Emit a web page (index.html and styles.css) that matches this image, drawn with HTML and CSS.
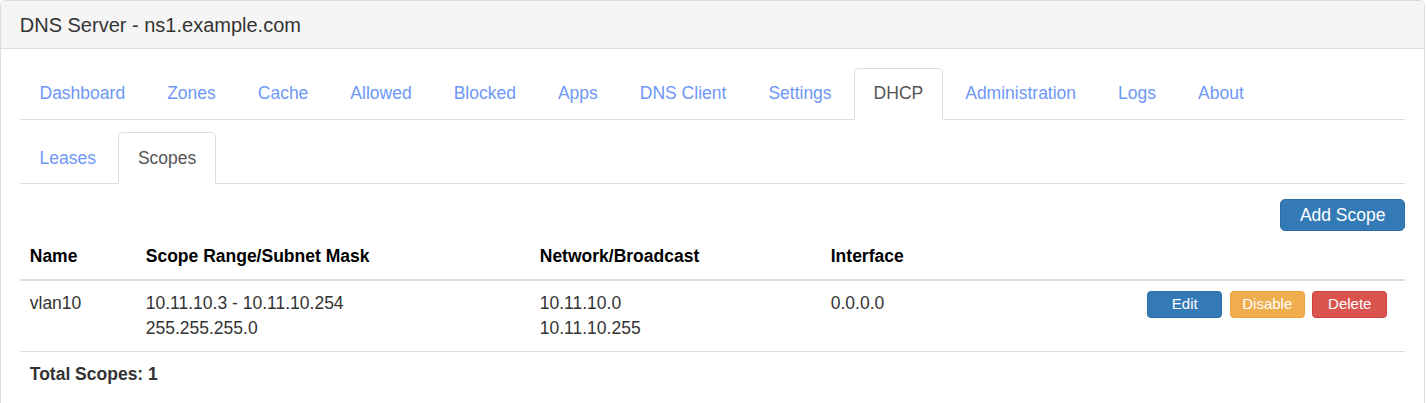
FILE: index.html
```html
<!DOCTYPE html>
<html lang="en">
<head>
<meta charset="utf-8">
<title>DNS Server - ns1.example.com</title>
<link rel="stylesheet" href="styles.css">
</head>
<body>
<div class="panel">
  <div class="panel-heading">
    <h3 class="panel-title">DNS Server - ns1.example.com</h3>
  </div>
  <div class="panel-body">
    <ul class="nav-tabs">
      <li><a href="#">Dashboard</a></li>
      <li><a href="#">Zones</a></li>
      <li><a href="#">Cache</a></li>
      <li><a href="#">Allowed</a></li>
      <li><a href="#">Blocked</a></li>
      <li><a href="#">Apps</a></li>
      <li><a href="#">DNS Client</a></li>
      <li><a href="#">Settings</a></li>
      <li class="active"><a href="#">DHCP</a></li>
      <li><a href="#">Administration</a></li>
      <li><a href="#">Logs</a></li>
      <li><a href="#">About</a></li>
    </ul>
    <div class="tab-content">
      <ul class="nav-tabs">
        <li><a href="#">Leases</a></li>
        <li class="active"><a href="#">Scopes</a></li>
      </ul>
      <div class="toolbar">
        <button class="btn btn-primary btn-add">Add Scope</button>
      </div>
      <table class="table">
        <thead>
          <tr>
            <th class="c-name">Name</th>
            <th class="c-range">Scope Range/Subnet Mask</th>
            <th class="c-net">Network/Broadcast</th>
            <th class="c-iface">Interface</th>
            <th class="c-actions"></th>
          </tr>
        </thead>
        <tbody>
          <tr>
            <td>vlan10</td>
            <td>10.11.10.3 - 10.11.10.254<br>255.255.255.0</td>
            <td>10.11.10.0<br>10.11.10.255</td>
            <td>0.0.0.0</td>
            <td class="c-actions">
              <div class="actions">
                <button class="btn btn-xs btn-primary">Edit</button>
                <button class="btn btn-xs btn-warning">Disable</button>
                <button class="btn btn-xs btn-danger">Delete</button>
              </div>
            </td>
          </tr>
        </tbody>
        <tfoot>
          <tr>
            <th colspan="5" class="total">Total Scopes: 1</th>
          </tr>
        </tfoot>
      </table>
    </div>
  </div>
</div>
</body>
</html>
```

FILE: styles.css
```css
* {
  box-sizing: border-box;
}

body {
  margin: 0;
  font-family: "Liberation Sans", Arial, sans-serif;
  font-size: 17.5px;
  line-height: 25px;
  color: #333;
  background: #fff;
}

.panel {
  margin-right: 2px;
  border: 1px solid #ddd;
  border-radius: 5px;
  background: #fff;
}

.panel-heading {
  padding: 12.5px 18.75px;
  background: #f5f5f5;
  border-bottom: 1px solid #ddd;
  border-radius: 4px 4px 0 0;
}

.panel-title {
  margin: 0;
  font-size: 20px;
  font-weight: normal;
  line-height: 22px;
  color: #333;
}

.panel-body {
  padding: 18.75px;
}

.nav-tabs {
  display: flex;
  margin: 0;
  padding: 0;
  list-style: none;
  border-bottom: 1px solid #ddd;
}

.nav-tabs li {
  margin-bottom: -1px;
  margin-right: 2.5px;
}

.nav-tabs a {
  display: block;
  padding: 12.5px 18.75px;
  line-height: 25px;
  border: 1px solid transparent;
  border-radius: 5px 5px 0 0;
  color: #6e97f7;
  text-decoration: none;
}

.nav-tabs li.active a {
  color: #555;
  background: #fff;
  border-color: #ddd #ddd transparent;
}

.tab-content {
  padding-top: 12.5px;
}

.toolbar {
  display: flex;
  justify-content: flex-end;
  padding-top: 15px;
  margin-bottom: 2.5px;
}

.btn {
  font-family: inherit;
  color: #fff;
  border: 1px solid transparent;
  cursor: pointer;
  text-align: center;
}

.btn-add {
  font-size: 17.5px;
  line-height: 25px;
  padding: 2.5px 18.75px;
  border-radius: 5px;
}

.btn-primary {
  background: #337ab7;
  border-color: #2e6da4;
}

.btn-warning {
  background: #f0ad4e;
  border-color: #eea236;
}

.btn-danger {
  background: #d9534f;
  border-color: #d43f3a;
}

.btn-xs {
  width: 75px;
  font-size: 15px;
  line-height: 22.5px;
  padding: 1.5px 0;
  border-radius: 3.75px;
}

.table {
  width: 100%;
  border-collapse: collapse;
  border-spacing: 0;
}

.table th,
.table td {
  padding: 10px;
  line-height: 25px;
  text-align: left;
  vertical-align: top;
}

.table thead th {
  vertical-align: bottom;
  color: #000;
  font-weight: bold;
  border-bottom: 2.5px solid #ddd;
}

.table tbody td {
  border-bottom: 1.25px solid #ddd;
}

.table .total {
  color: #333;
}

.c-name {
  width: 116px;
}

.c-range {
  width: 394px;
}

.c-net {
  width: 291px;
}

.c-iface {
  width: 280px;
}

.table .c-actions {
  padding-right: 18px;
}

.actions {
  display: flex;
  justify-content: flex-end;
  gap: 7.5px;
}
```
